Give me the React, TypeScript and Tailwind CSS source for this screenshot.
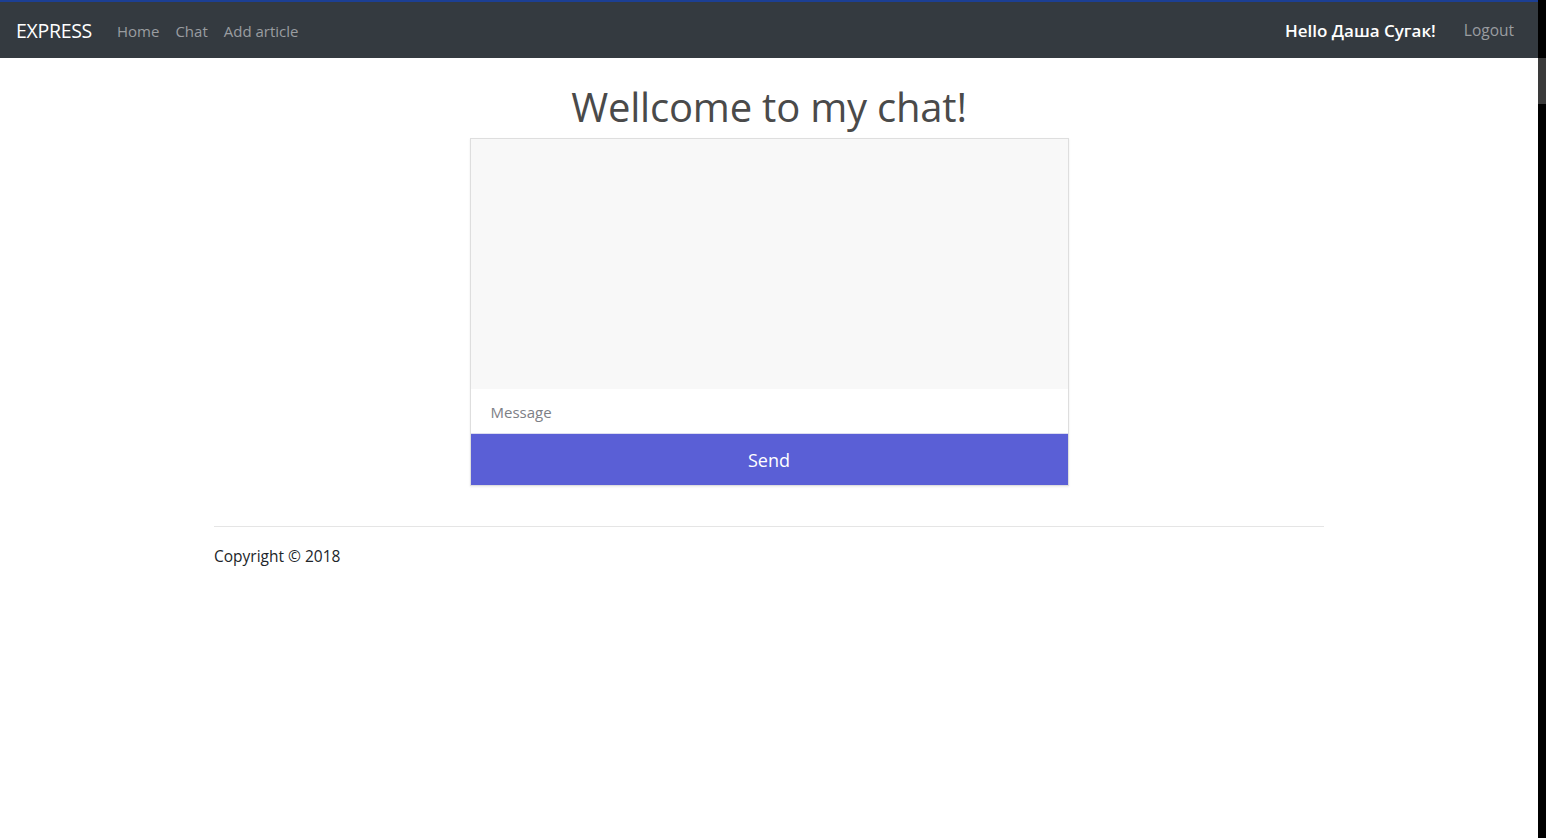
import React from 'react';

const App: React.FC = () => {
  return (
    <div className="flex w-[1546px] h-[838px] overflow-hidden bg-black" style={{ fontFamily: '"Open Sans", "Noto Sans", sans-serif' }}>
      <div className="w-[1538px] h-full bg-white flex flex-col">
        <nav className="h-[58px] bg-[#343a40] border-t-2 border-[#1c3f94] flex items-center px-4 pt-[2px]">
          <a className="text-white text-[19.5px] tracking-[-0.3px] mr-[25px] -mt-px">EXPRESS</a>
          <ul className="flex items-center gap-4 text-[15px] text-[#9a9da0]">
            <li>Home</li>
            <li>Chat</li>
            <li>Add article</li>
          </ul>
          <div className="ml-auto flex items-center">
            <span className="text-white font-semibold text-[17px] mr-[28px]">Hello Даша Сугак!</span>
            <span className="text-[#9a9da0] text-[15.5px] mr-[8px]">Logout</span>
          </div>
        </nav>

        <main className="flex flex-col items-center">
          <h1 className="text-[40px] font-medium leading-[1.2] text-[#4a4a4a] mt-[25px] mb-[7px] tracking-[-0.2px]">Wellcome to my chat!</h1>
          <div className="w-[599px] border border-[#dedede] shadow-[0_1px_2px_rgba(0,0,0,0.08)] flex flex-col">
            <div className="h-[250px] bg-[#f8f8f8]"></div>
            <input
              placeholder="Message"
              className="h-[45px] px-5 pt-[2px] text-[15px] bg-white outline-none placeholder:text-[#7d8086] border-b border-[#dcdcf0]"
            />
            <button className="h-[51px] bg-[#5a5fd6] text-white text-[18px] pt-[2px]">Send</button>
          </div>
        </main>

        <footer className="w-[1110px] mx-auto mt-[40px] border-t border-[#e5e5e5] pt-[18px]">
          <p className="text-[15.5px] text-[#212529]">Copyright © 2018</p>
        </footer>
      </div>
      <div className="w-[8px] h-full flex flex-col">
        <div className="h-[58px]"></div>
        <div className="h-[46px] bg-[#3a3a3a]"></div>
      </div>
    </div>
  );
};

export default App;
